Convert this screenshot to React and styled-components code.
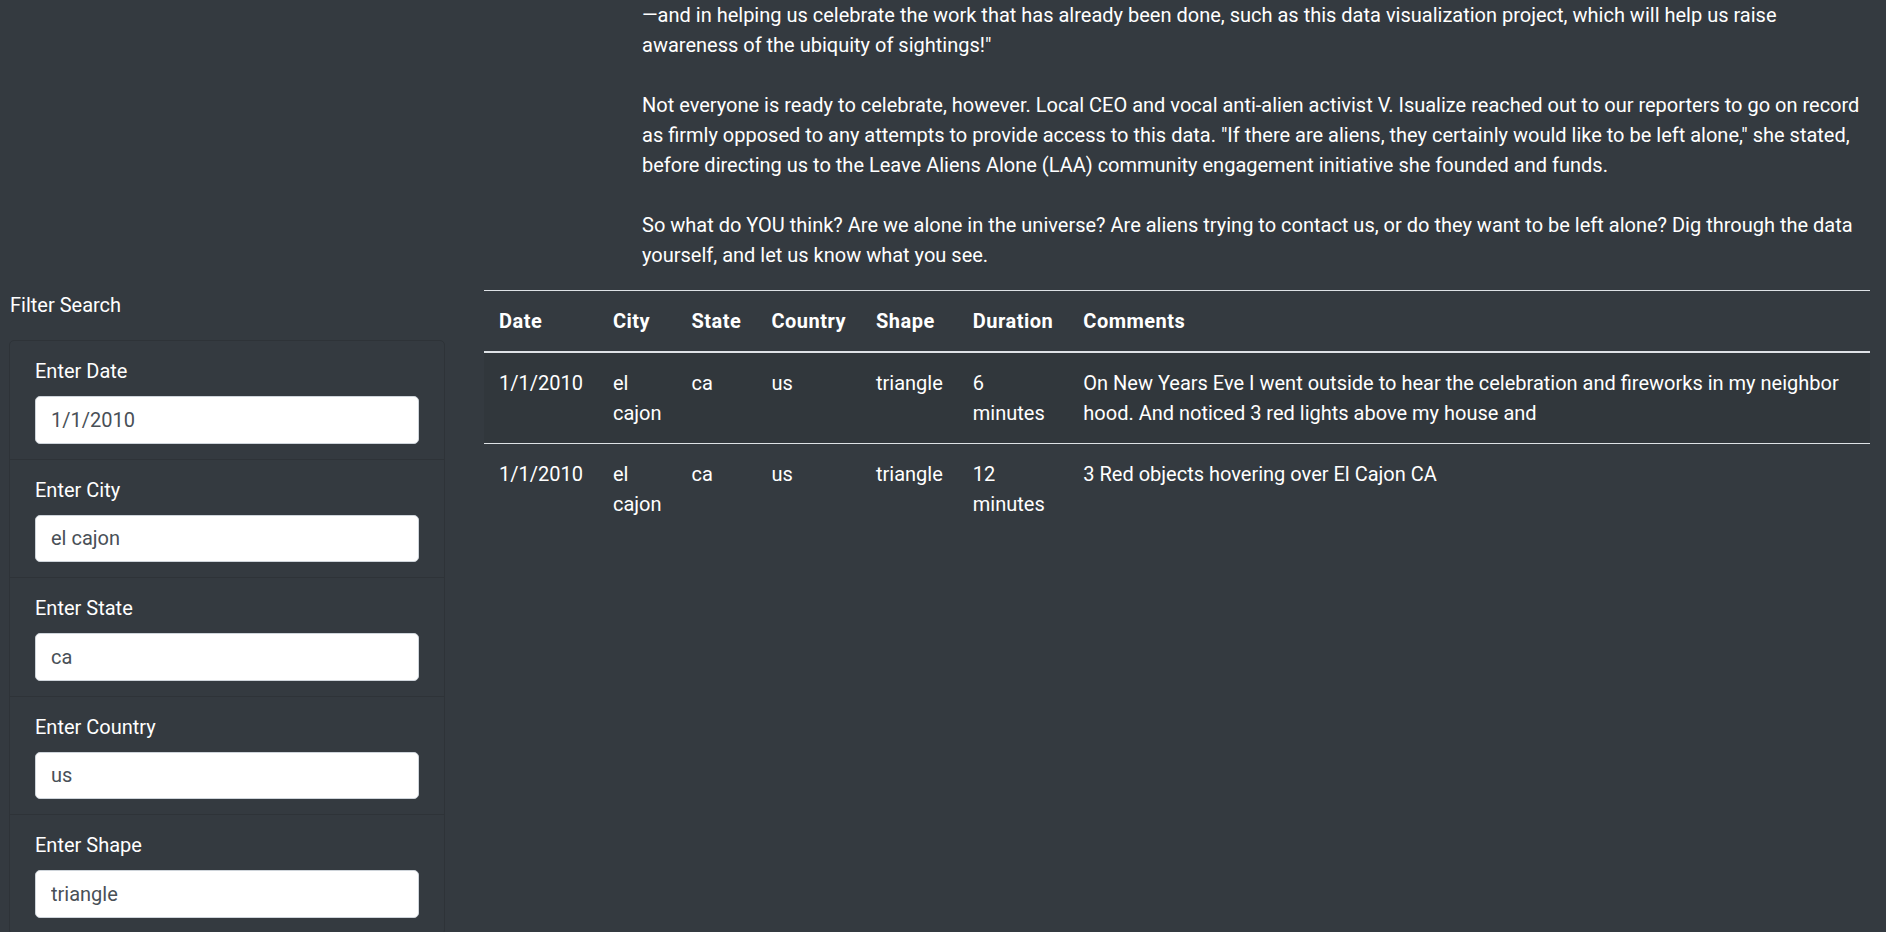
import React from 'react';
import styled, { createGlobalStyle } from 'styled-components';

const GlobalStyle = createGlobalStyle`
  html, body {
    margin: 0;
    padding: 0;
    background: #343a40;
    color: #fff;
    font-family: Roboto, "Liberation Sans", sans-serif;
    font-size: 20px;
    line-height: 30px;
    overflow: hidden;
  }
  * {
    box-sizing: border-box;
  }
`;

const Page = styled.div`
  height: 932px;
  overflow: hidden;
`;

const Story = styled.article`
  margin-left: 642px;
  width: 1228px;
`;

const Paragraph = styled.p`
  margin: 0 0 ${props => (props.last ? 20 : 30)}px;
`;

const Row = styled.div`
  display: grid;
  grid-template-columns: 436px 1386px;
  column-gap: 39px;
  padding-left: 9px;
  align-items: start;
`;

const Sidebar = styled.aside`
  display: flex;
  flex-direction: column;
`;

const SidebarTitle = styled.div`
  padding-left: 1px;
  margin-bottom: 20px;
`;

const FilterCard = styled.ul`
  list-style: none;
  margin: 0;
  padding: 0;
  border: 1px solid #2e3338;
  border-radius: 5px;
`;

const FilterItem = styled.li`
  padding: 15px 25px;
  border-bottom: 1px solid #2e3338;
`;

const FilterLabel = styled.label`
  display: block;
  margin-bottom: 10px;
`;

const FilterInput = styled.input`
  display: block;
  width: 100%;
  height: 47.5px;
  padding: 7.5px 15px;
  font: inherit;
  color: #495057;
  background: #fff;
  border: 1px solid #ced4da;
  border-radius: 5px;
  outline: none;
`;

const DataTable = styled.table`
  width: 100%;
  border-collapse: collapse;
  color: #fff;
`;

const HeadCell = styled.th`
  width: ${props => (props.wide ? '100%' : 'auto')};
  padding: 15px;
  text-align: left;
  font-weight: 700;
  letter-spacing: 0.5px;
  vertical-align: bottom;
  border-top: 1px solid #dee2e6;
  border-bottom: 2px solid #dee2e6;
`;

const BodyRow = styled.tr`
  background: ${props => (props.striped ? 'rgba(0, 0, 0, 0.05)' : 'transparent')};
`;

const Cell = styled.td`
  padding: 15px;
  vertical-align: top;
  border-top: 1px solid #dee2e6;
`;

const filters = [
  { label: 'Enter Date', value: '1/1/2010' },
  { label: 'Enter City', value: 'el cajon' },
  { label: 'Enter State', value: 'ca' },
  { label: 'Enter Country', value: 'us' },
  { label: 'Enter Shape', value: 'triangle' },
];

const columns = ['Date', 'City', 'State', 'Country', 'Shape', 'Duration', 'Comments'];

const sightings = [
  ['1/1/2010', 'el cajon', 'ca', 'us', 'triangle', '6 minutes',
    'On New Years Eve I went outside to hear the celebration and fireworks in my neighbor hood. And noticed 3 red lights above my house and'],
  ['1/1/2010', 'el cajon', 'ca', 'us', 'triangle', '12 minutes',
    '3 Red objects hovering over El Cajon CA'],
];

const App = () => (
  <Page>
    <GlobalStyle />
    <Story>
      <Paragraph>
        —and in helping us celebrate the work that has already been done, such as this data visualization project, which will help us raise awareness of the ubiquity of sightings!"
      </Paragraph>
      <Paragraph>
        Not everyone is ready to celebrate, however. Local CEO and vocal anti-alien activist V. Isualize reached out to our reporters to go on record as firmly opposed to any attempts to provide access to this data. "If there are aliens, they certainly would like to be left alone," she stated, before directing us to the Leave Aliens Alone (LAA) community engagement initiative she founded and funds.
      </Paragraph>
      <Paragraph last>
        So what do YOU think? Are we alone in the universe? Are aliens trying to contact us, or do they want to be left alone? Dig through the data yourself, and let us know what you see.
      </Paragraph>
    </Story>
    <Row>
      <Sidebar>
        <SidebarTitle>Filter Search</SidebarTitle>
        <FilterCard>
          {filters.map(item => (
            <FilterItem key={item.label}>
              <FilterLabel>{item.label}</FilterLabel>
              <FilterInput type="text" defaultValue={item.value} />
            </FilterItem>
          ))}
        </FilterCard>
      </Sidebar>
      <DataTable>
        <thead>
          <tr>
            {columns.map(col => (
              <HeadCell key={col} wide={col === 'Comments'}>{col}</HeadCell>
            ))}
          </tr>
        </thead>
        <tbody>
          {sightings.map((row, i) => (
            <BodyRow key={i} striped={i % 2 === 0}>
              {row.map((value, j) => (
                <Cell key={j}>{value}</Cell>
              ))}
            </BodyRow>
          ))}
        </tbody>
      </DataTable>
    </Row>
  </Page>
);

export default App;
